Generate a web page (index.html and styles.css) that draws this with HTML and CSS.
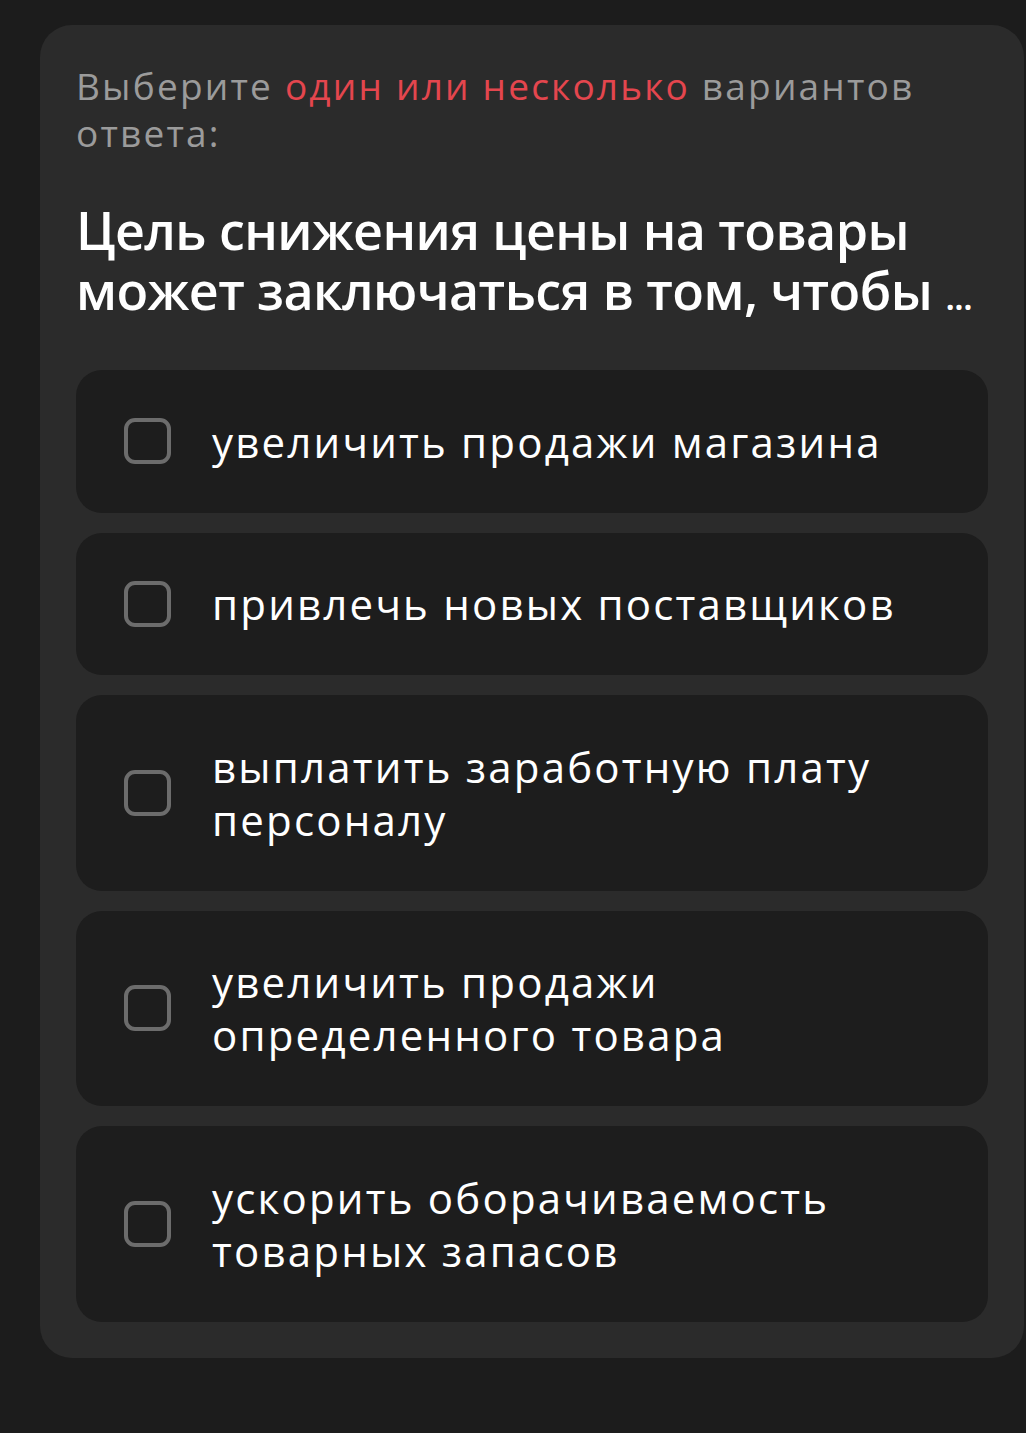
FILE: index.html
```html
<!DOCTYPE html>
<html lang="ru">
<head>
<meta charset="utf-8">
<link rel="stylesheet" href="styles.css">
</head>
<body>
<div class="card">
  <p class="hint">Выберите <span class="accent">один или несколько</span> вариантов ответа:</p>
  <h1 class="question">Цель снижения цены на товары может заключаться в том, чтобы <span class="dots">...</span></h1>
  <div class="options">
    <label class="option"><span class="box"></span><span class="text">увеличить продажи магазина</span></label>
    <label class="option"><span class="box"></span><span class="text">привлечь новых поставщиков</span></label>
    <label class="option"><span class="box"></span><span class="text">выплатить заработную плату персоналу</span></label>
    <label class="option"><span class="box"></span><span class="text">увеличить продажи определенного товара</span></label>
    <label class="option"><span class="box"></span><span class="text">ускорить оборачиваемость товарных запасов</span></label>
  </div>
</div>
</body>
</html>
```

FILE: styles.css
```css
html, body {
  margin: 0;
  padding: 0;
  background: #1c1c1c;
}
body {
  font-family: "Open Sans", "Noto Sans", sans-serif;
  padding: 25px 2px 0 40px;
  min-height: 1433px;
  box-sizing: border-box;
}
.card {
  background: #2b2b2b;
  border-radius: 32px;
  padding: 37px 36px 36px 36px;
}
.hint {
  margin: 0;
  font-size: 37px;
  line-height: 47px;
  font-weight: 400;
  letter-spacing: 2.2px;
  color: #9b9b9b;
}
.accent {
  color: #e4464e;
}
.question {
  margin: 44px 0 50px;
  font-size: 52px;
  line-height: 60px;
  font-weight: 600;
  letter-spacing: -0.6px;
  color: #ffffff;
}
.dots {
  font-size: 36px;
  line-height: 0;
  letter-spacing: -1px;
}
.options {
  display: flex;
  flex-direction: column;
  gap: 20px;
}
.option {
  display: flex;
  align-items: center;
  gap: 41px;
  background: #1d1d1d;
  border-radius: 26px;
  padding: 44.5px 40px 45px 48px;
}
.box {
  flex: none;
  width: 39px;
  height: 38px;
  border: 4px solid #6c6c6c;
  border-radius: 11px;
}
.text {
  font-size: 42px;
  line-height: 53px;
  font-weight: 400;
  letter-spacing: 2.2px;
  color: #ffffff;
}
```
